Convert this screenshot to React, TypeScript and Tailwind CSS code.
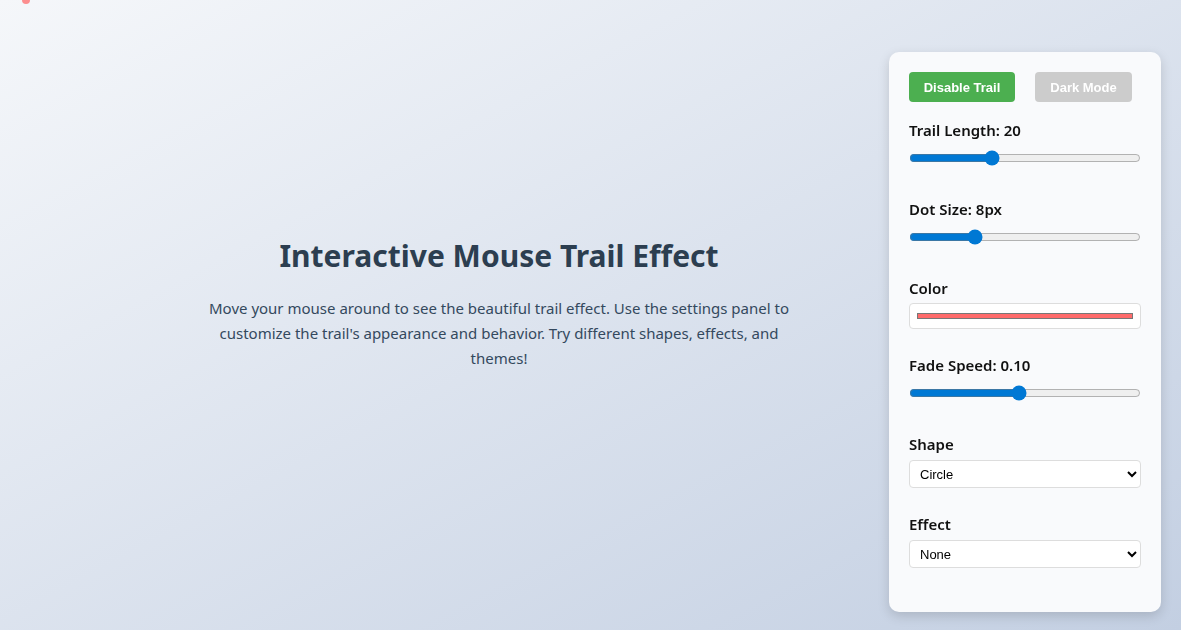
import { useState } from "react";

// Panel group wrapper: label on top, control below
function Group({ label, children, className }: { label: string; children: React.ReactNode; className: string }) {
    return (
        <div className={className}>
            <label className="block h-[20px] leading-[20px] text-[15px] font-semibold text-[#111]">{label}</label>
            {children}
        </div>
    );
}

export default function App() {
    const [enabled, setEnabled] = useState(true);
    const [trailLength, setTrailLength] = useState(20);
    const [dotSize, setDotSize] = useState(8);
    const [color, setColor] = useState("#ff6b6b");
    const [fade, setFade] = useState(0.1);
    const [shape, setShape] = useState("circle");
    const [effect, setEffect] = useState("none");

    return (
        <div className="relative h-[630px] w-full overflow-hidden bg-gradient-to-br from-[#f5f7fa] to-[#c3cfe2] font-['Noto_Sans',sans-serif]">
            {/* last trail dot left over at the top */}
            <div className="absolute left-[22px] top-[-4px] h-[8px] w-[8px] rounded-full bg-[#ff6b6b] opacity-75" />

            <main className="flex h-full flex-col items-center pr-[183px] pt-[237px]">
                <h1 className="text-[30px] font-bold leading-[38px] text-[#2c3e50]">Interactive Mouse Trail Effect</h1>
                <p className="mt-[21px] w-[600px] text-center text-[15px] leading-[25px] text-[#34495e]">
                    Move your mouse around to see the beautiful trail effect. Use the settings panel to customize the
                    trail's appearance and behavior. Try different shapes, effects, and themes!
                </p>
            </main>

            <aside className="fixed right-[20px] top-[52px] h-[560px] w-[272px] rounded-[10px] bg-[#f9fafc] p-[20px] shadow-[0_4px_12px_rgba(0,0,0,0.15)]">
                <div className="flex gap-[20px] font-['Liberation_Sans',sans-serif] text-[13px] font-bold text-white">
                    <button
                        onClick={() => setEnabled((prev) => !prev)}
                        className="h-[30px] w-[106px] rounded-[4px] bg-[#4caf50] pt-[1px]"
                    >
                        {enabled ? "Disable Trail" : "Enable Trail"}
                    </button>
                    <button className="h-[30px] w-[97px] rounded-[4px] bg-[#cccccc] pt-[1px]">Dark Mode</button>
                </div>

                <Group label={`Trail Length: ${trailLength}`} className="mt-[18px] h-[79px]">
                    <input
                        type="range"
                        min={1}
                        max={56}
                        value={trailLength}
                        onChange={(e) => setTrailLength(Number(e.target.value))}
                        className="mt-[10px] block w-full accent-[#0078d4]"
                    />
                </Group>

                <Group label={`Dot Size: ${dotSize}px`} className="h-[79px]">
                    <input
                        type="range"
                        min={1}
                        max={27}
                        value={dotSize}
                        onChange={(e) => setDotSize(Number(e.target.value))}
                        className="mt-[10px] block w-full accent-[#0078d4]"
                    />
                </Group>

                <Group label="Color" className="h-[77px]">
                    <input
                        type="color"
                        value={color}
                        onChange={(e) => setColor(e.target.value)}
                        className="mt-[5px] block h-[26px] w-full rounded-[4px] border border-[#dddddd] bg-white p-[5px]"
                    />
                </Group>

                <Group label={`Fade Speed: ${fade.toFixed(2)}`} className="h-[79px]">
                    <input
                        type="range"
                        min={0.01}
                        max={0.2}
                        step={0.01}
                        value={fade}
                        onChange={(e) => setFade(Number(e.target.value))}
                        className="mt-[10px] block w-full accent-[#0078d4]"
                    />
                </Group>

                <Group label="Shape" className="h-[80px]">
                    <select
                        value={shape}
                        onChange={(e) => setShape(e.target.value)}
                        className="mt-[6px] block h-[28px] w-full rounded-[4px] border border-[#dddddd] bg-white px-[6px] font-['Liberation_Sans',sans-serif] text-[13px] text-black"
                    >
                        <option value="circle">Circle</option>
                        <option value="square">Square</option>
                        <option value="star">Star</option>
                    </select>
                </Group>

                <Group label="Effect" className="">
                    <select
                        value={effect}
                        onChange={(e) => setEffect(e.target.value)}
                        className="mt-[6px] block h-[28px] w-full rounded-[4px] border border-[#dddddd] bg-white px-[6px] font-['Liberation_Sans',sans-serif] text-[13px] text-black"
                    >
                        <option value="none">None</option>
                        <option value="rainbow">Rainbow</option>
                        <option value="glow">Glow</option>
                    </select>
                </Group>
            </aside>
        </div>
    );
}
